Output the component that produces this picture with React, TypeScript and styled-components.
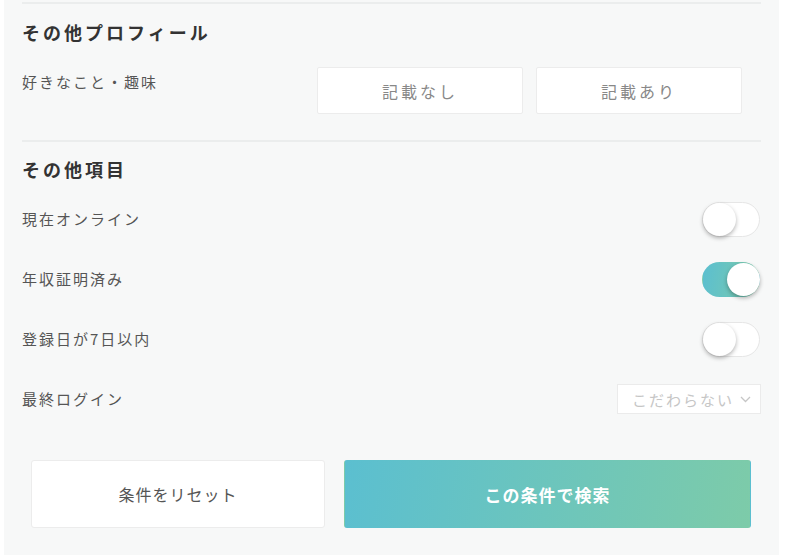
import styled, { createGlobalStyle } from 'styled-components';

const GlobalStyle = createGlobalStyle`
  html, body {
    margin: 0;
    padding: 0;
    background: #ffffff;
  }
  body {
    font-family: "Noto Sans CJK JP", "Noto Sans", sans-serif;
    color: #555;
  }
  * {
    box-sizing: border-box;
  }
`;

const _gradient = 'linear-gradient(100deg, #5bbfd0 0%, #7dcba9 100%)';

const StdPanel = styled.div`
  width: 775px;
  height: 555px;
  margin-left: 4px;
  padding: 0 18px;
  background: #f7f8f8;
  overflow: hidden;
`;

const StdSection = styled.section`
  margin-top: 2px;
  padding: 15px 0 26px;
  border-top: 2px solid #ebeded;

  & + & {
    margin-top: 0;
    padding-top: 14px;
    padding-bottom: 0;
  }
`;

const StdHeading = styled.h3`
  margin: 0;
  font-size: 18px;
  line-height: 26px;
  font-weight: 700;
  letter-spacing: 3px;
  color: #333;
`;

const StdChoiceRow = styled.div`
  display: flex;
  justify-content: space-between;
  margin-top: 22px;
  padding-right: 19px;
`;

const StdLabel = styled.span<{ $top?: boolean }>`
  font-size: 15px;
  line-height: 22px;
  letter-spacing: 2px;
  color: #555;
  padding-top: ${({ $top }) => ($top ? '4px' : '0')};
`;

const StdChoices = styled.div`
  display: flex;
  gap: 13px;
`;

const StdChoice = styled.button`
  width: 206px;
  height: 47px;
  background: #fff;
  border: 1px solid #ececec;
  border-radius: 2px;
  font-family: inherit;
  font-size: 16px;
  letter-spacing: 3px;
  color: #888;
  cursor: pointer;
`;

const StdItemList = styled.div`
  margin-top: 7px;
`;

const StdItemRow = styled.div`
  display: flex;
  align-items: center;
  justify-content: space-between;
  height: 60px;
`;

const StdToggle = styled.span<{ $on: boolean }>`
  position: relative;
  display: inline-block;
  width: 58px;
  height: 35px;
  margin-right: 1px;
  border-radius: 18px;
  background: ${({ $on }) => ($on ? _gradient : '#fff')};
  border: 1px solid ${({ $on }) => ($on ? 'transparent' : '#e6e6e6')};

  &::after {
    content: '';
    position: absolute;
    top: 0;
    left: ${({ $on }) => ($on ? '24px' : '0')};
    width: 33px;
    height: 33px;
    border-radius: 50%;
    background: #fff;
    box-shadow: 0 2px 4px rgba(0, 0, 0, 0.3);
  }
`;

const StdSelect = styled.div`
  display: flex;
  align-items: center;
  justify-content: flex-end;
  gap: 6px;
  width: 144px;
  height: 30px;
  padding: 0 9px 0 0;
  background: #fff;
  border: 1px solid #ebebeb;
  font-size: 15px;
  letter-spacing: 2px;
  color: #c6c6c6;
`;

const StdFooter = styled.div`
  display: flex;
  gap: 19px;
  margin-top: 31px;
  padding: 0 10px 0 9px;
`;

const StdButton = styled.button<{ $primary?: boolean }>`
  height: 68px;
  flex: ${({ $primary }) => ($primary ? '0 0 407px' : '0 0 294px')};
  border-radius: 3px;
  border: 1px solid ${({ $primary }) => ($primary ? 'transparent' : '#ececec')};
  background: ${({ $primary }) => ($primary ? _gradient : '#fff')};
  color: ${({ $primary }) => ($primary ? '#fff' : '#555')};
  font-family: inherit;
  font-size: ${({ $primary }) => ($primary ? '17px' : '16px')};
  font-weight: ${({ $primary }) => ($primary ? 700 : 400)};
  letter-spacing: 1px;
  cursor: pointer;
`;

const Chevron = () => (
  <svg width="11" height="7" viewBox="0 0 11 7" fill="none">
    <path d="M1 1l4.5 4.5L10 1" stroke="#c6c6c6" strokeWidth="1.3" />
  </svg>
);

const toggles = [
  { label: '現在オンライン', on: false },
  { label: '年収証明済み', on: true },
  { label: '登録日が7日以内', on: false },
];

const App: React.FC = () => {
  return (
    <>
      <GlobalStyle />
      <StdPanel>
        <StdSection>
          <StdHeading>その他プロフィール</StdHeading>
          <StdChoiceRow>
            <StdLabel $top>好きなこと・趣味</StdLabel>
            <StdChoices>
              <StdChoice>記載なし</StdChoice>
              <StdChoice>記載あり</StdChoice>
            </StdChoices>
          </StdChoiceRow>
        </StdSection>

        <StdSection>
          <StdHeading>その他項目</StdHeading>
          <StdItemList>
            {toggles.map((t) => (
              <StdItemRow key={t.label}>
                <StdLabel>{t.label}</StdLabel>
                <StdToggle $on={t.on} />
              </StdItemRow>
            ))}
            <StdItemRow>
              <StdLabel>最終ログイン</StdLabel>
              <StdSelect>
                こだわらない
                <Chevron />
              </StdSelect>
            </StdItemRow>
          </StdItemList>
        </StdSection>

        <StdFooter>
          <StdButton>条件をリセット</StdButton>
          <StdButton $primary>この条件で検索</StdButton>
        </StdFooter>
      </StdPanel>
    </>
  );
};

export default App;
